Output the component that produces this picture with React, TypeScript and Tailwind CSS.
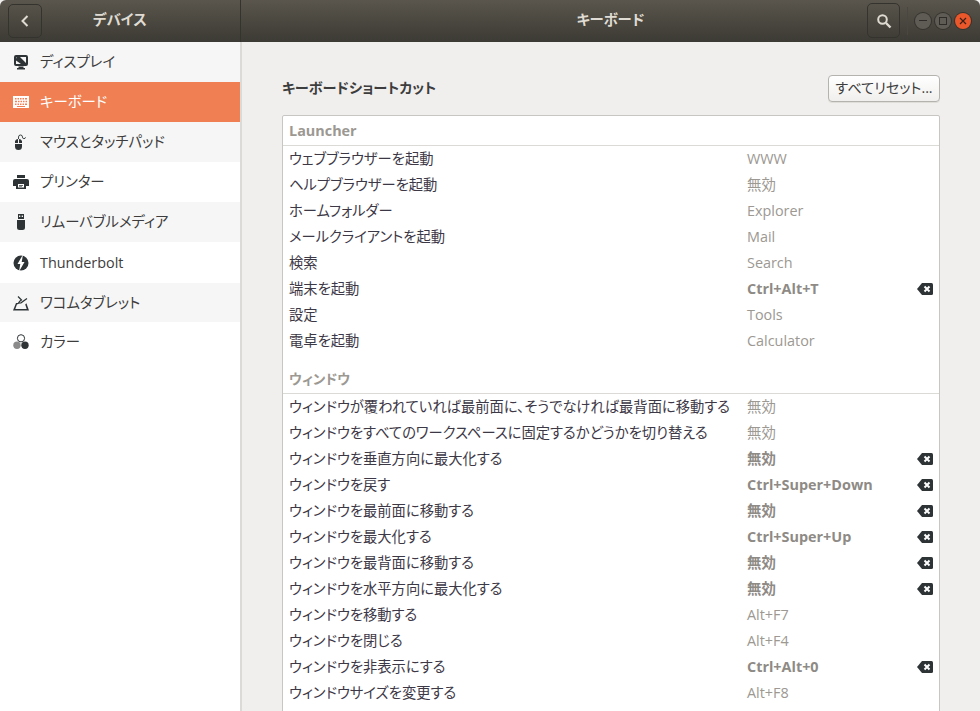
import * as React from "react";

const FONT = "font-['Open_Sans','Noto_Sans_CJK_JP',sans-serif]";

function DisplayIcon() {
  return (
    <svg width="16" height="16" viewBox="0 0 16 16" fill="#2e3436">
      <path d="M3 1h10a2 2 0 0 1 2 2v7a2 2 0 0 1-2 2H3a2 2 0 0 1-2-2V3a2 2 0 0 1 2-2zm.5 2H3v2zM7 3l6 6V3zM3 6.500V10h5z" fillRule="evenodd" />
      <path d="M5.500 12.500h5V14H12v1.500H4V14h1.500z" />
    </svg>
  );
}
function KeyboardIcon() {
  return (
    <svg width="16" height="12" viewBox="0 0 16 12" fill="#fff">
      <path
        fillRule="evenodd"
        d="M0 0h16v12H0zM2 2v1.500h1.500V2zm2.500 0v1.500H6V2zM7 2v1.500h1.500V2zm2.500 0v1.500H11V2zM12 2v1.500h2V2zM2 4.800v1.500h2V4.800zm3 0v1.500h1.500V4.800zm2.500 0v1.500H9V4.800zm2.500 0v1.500h1.500V4.800zm2.500 0v1.500H14V4.800zM2 7.600v1.500h1.500V7.600zm2.500 0v1.500H6V7.600zM7 7.600v1.500h1.500V7.600zm2.500 0v1.500H11V7.600zM12 7.600v1.500h2V7.600zM4 10v1h8v-1z"
      />
    </svg>
  );
}
function MouseIcon() {
  return (
    <svg width="14" height="16" viewBox="0 0 14 16" fill="#2e3436">
      <path d="M1 7a4 4 0 0 1 3-2v4H1zM5 5a4 4 0 0 1 3 2v2H5zM1 10h7v2.500a3.500 3.500 0 0 1-7 0z" />
      <path d="M4.500 5V3a2 2 0 0 1 4 0 1.500 1.500 0 0 0 3 .3" fill="none" stroke="#2e3436" strokeWidth="0.9" />
    </svg>
  );
}
function PrinterIcon() {
  return (
    <svg width="16" height="16" viewBox="0 0 16 16" fill="#2e3436">
      <path d="M4 1h8v3H4z" />
      <path
        fillRule="evenodd"
        d="M2 5h12a2 2 0 0 1 2 2v5h-3v3H3v-3H0V7a2 2 0 0 1 2-2zm3 5v3.500h6V10zm1 1h4v.8H6zm0 1.400h3v.6H6z"
      />
    </svg>
  );
}
function UsbIcon() {
  return (
    <svg width="10" height="16" viewBox="0 0 10 16" fill="#2e3436">
      <path fillRule="evenodd" d="M2 0h6v5H2zM3 1.500V3h1.300V1.500zm2.700 0V3H7V1.500z" />
      <path d="M1 6h8v7.500a2.500 2.500 0 0 1-2.500 2.500h-3A2.500 2.500 0 0 1 1 13.500z" />
    </svg>
  );
}
function BoltIcon() {
  return (
    <svg width="16" height="16" viewBox="0 0 16 16">
      <circle cx="8" cy="8" r="7.500" fill="#2e3436" />
      <path d="M10-.5 4.500 9H7.300L6 16.500 11.500 7H8.700z" fill="#fff" />
    </svg>
  );
}
function TabletIcon() {
  return (
    <svg width="16" height="16" viewBox="0 0 16 16" fill="#2e3436">
      <path d="M3 8h3L5 9.300H4L2.300 14h11.400l-1.500-4.500 1.200-1.200L16 15.500H0z" />
      <path d="M5 1.500 8.500 5 6.800 6.200 5.500 8 8 7.800l6-4.300" fill="none" stroke="#2e3436" strokeWidth="1.200" />
    </svg>
  );
}
function ColorIcon() {
  return (
    <svg width="16" height="16" viewBox="0 0 16 16">
      <circle cx="8" cy="4.300" r="3.600" fill="#fff" stroke="#2e3436" strokeWidth="1" />
      <circle cx="4" cy="11.300" r="3.700" fill="#8b8b8b" />
      <circle cx="12" cy="11.300" r="3.700" fill="#2e3436" />
    </svg>
  );
}
function ClearIcon() {
  return (
    <svg width="16" height="12" viewBox="0 0 16 12">
      <path d="M5 0h9.500A1.500 1.500 0 0 1 16 1.500v9a1.500 1.500 0 0 1-1.500 1.500H5L0 6z" fill="#2e3436" />
      <path d="m7.500 3.500 5 5m0-5-5 5" stroke="#fff" strokeWidth="2" />
    </svg>
  );
}

const sidebar: { label: string; icon: React.ReactNode; h: string; bg: string }[] = [
  { label: "ディスプレイ", icon: <DisplayIcon />, h: "h-10", bg: "bg-[#f6f6f6]" },
  { label: "キーボード", icon: <KeyboardIcon />, h: "h-10", bg: "bg-[#f08054] text-white" },
  { label: "マウスとタッチパッド", icon: <MouseIcon />, h: "h-10", bg: "bg-[#f6f6f6]" },
  { label: "プリンター", icon: <PrinterIcon />, h: "h-10", bg: "bg-white" },
  { label: "リムーバブルメディア", icon: <UsbIcon />, h: "h-10", bg: "bg-[#f6f6f6]" },
  { label: "Thunderbolt", icon: <BoltIcon />, h: "h-[41px]", bg: "bg-white" },
  { label: "ワコムタブレット", icon: <TabletIcon />, h: "h-[39px]", bg: "bg-[#f6f6f6]" },
  { label: "カラー", icon: <ColorIcon />, h: "h-10", bg: "bg-white" },
];

type Shortcut = { name: string; key: string; custom?: boolean };

const launcher: Shortcut[] = [
  { name: "ウェブブラウザーを起動", key: "WWW" },
  { name: "ヘルプブラウザーを起動", key: "無効" },
  { name: "ホームフォルダー", key: "Explorer" },
  { name: "メールクライアントを起動", key: "Mail" },
  { name: "検索", key: "Search" },
  { name: "端末を起動", key: "Ctrl+Alt+T", custom: true },
  { name: "設定", key: "Tools" },
  { name: "電卓を起動", key: "Calculator" },
];

const windows: Shortcut[] = [
  { name: "ウィンドウが覆われていれば最前面に、そうでなければ最背面に移動する", key: "無効" },
  { name: "ウィンドウをすべてのワークスペースに固定するかどうかを切り替える", key: "無効" },
  { name: "ウィンドウを垂直方向に最大化する", key: "無効", custom: true },
  { name: "ウィンドウを戻す", key: "Ctrl+Super+Down", custom: true },
  { name: "ウィンドウを最前面に移動する", key: "無効", custom: true },
  { name: "ウィンドウを最大化する", key: "Ctrl+Super+Up", custom: true },
  { name: "ウィンドウを最背面に移動する", key: "無効", custom: true },
  { name: "ウィンドウを水平方向に最大化する", key: "無効", custom: true },
  { name: "ウィンドウを移動する", key: "Alt+F7" },
  { name: "ウィンドウを閉じる", key: "Alt+F4" },
  { name: "ウィンドウを非表示にする", key: "Ctrl+Alt+0", custom: true },
  { name: "ウィンドウサイズを変更する", key: "Alt+F8" },
];

function Row({ item }: { item: Shortcut }) {
  return (
    <div className="flex h-[26px] items-center pl-[6px] pr-[6px]">
      <span className="w-[458px] shrink-0 whitespace-nowrap text-[14.3px] text-[#3d3846]">{item.name}</span>
      <span className={item.custom ? "font-bold text-[#8e8a85]" : "text-[#9c9892]"}>{item.key}</span>
      {item.custom && (
        <span className="ml-auto flex">
          <ClearIcon />
        </span>
      )}
    </div>
  );
}

export default function App() {
  return (
    <div className={`${FONT} flex h-[711px] w-[980px] flex-col overflow-hidden bg-[#f0efed] text-[14.4px] text-[#3d3d3d] [font-feature-settings:'palt']`}>
      {/* Title bar */}
      <div className="flex h-[42px] shrink-0 rounded-t-[6px] bg-gradient-to-b from-[#5a564d] to-[#3c3a34] text-[#dfdbd2]">
        <div className="flex w-[241px] shrink-0 items-center border-r border-[#35332e] pl-[8px]">
          <button className="flex h-[34px] w-[34px] items-center justify-center rounded-[5px] border border-[#35332e]">
            <svg width="12" height="14" viewBox="0 0 12 14">
              <path d="M8.500 2 3.500 7l5 5" fill="none" stroke="#dfdbd2" strokeWidth="2" />
            </svg>
          </button>
          <span className="mb-[3px] ml-[51px] font-semibold">デバイス</span>
        </div>
        <div className="relative flex flex-1 items-center justify-center">
          <span className="mb-[3px] font-semibold">キーボード</span>
          <div className="absolute right-[9px] top-[3px] flex items-center">
            <button className="flex h-[35px] w-[33px] items-center justify-center rounded-[5px] border border-[#35332e]">
              <svg width="16" height="16" viewBox="0 0 16 16">
                <circle cx="6.500" cy="6.500" r="4.300" fill="none" stroke="#dfdbd2" strokeWidth="2" />
                <path d="m10 10 4.500 4.500" stroke="#dfdbd2" strokeWidth="2.400" />
              </svg>
            </button>
            <div className="mx-[7px] h-[28px] w-px bg-[#4a4740]" />
            <div className="flex gap-[4px]">
              <span className="flex h-[16px] w-[16px] items-center justify-center rounded-full bg-[#5f5c55] shadow-[0_0_0_1px_#35332e]">
                <span className="h-px w-[8px] bg-[#2e2c28]" />
              </span>
              <span className="flex h-[16px] w-[16px] items-center justify-center rounded-full bg-[#5f5c55] shadow-[0_0_0_1px_#35332e]">
                <span className="h-[8px] w-[8px] border border-[#2e2c28]" />
              </span>
              <span className="flex h-[16px] w-[16px] items-center justify-center rounded-full bg-[#e9572b] shadow-[0_0_0_1px_#35332e]">
                <svg width="8" height="8" viewBox="0 0 8 8">
                  <path d="m1 1 6 6m0-6-6 6" stroke="#3a2018" strokeWidth="1.200" />
                </svg>
              </span>
            </div>
          </div>
        </div>
      </div>

      <div className="flex min-h-0 flex-1">
        {/* Sidebar */}
        <div className="w-[242px] shrink-0 border-r-2 border-[#dcdad6] bg-white">
          {sidebar.map((s) => (
            <div key={s.label} className={`flex items-center ${s.h} ${s.bg}`}>
              <span className="flex w-[40px] shrink-0 justify-center pl-[1px]">{s.icon}</span>
              <span className="whitespace-nowrap">{s.label}</span>
            </div>
          ))}
        </div>

        {/* Shortcut list */}
        <div className="min-w-0 flex-1 pl-[40px] pr-[40px] pt-[32px]">
          <div className="flex h-[28px] items-center justify-between">
            <span className="text-[14.2px] font-bold">キーボードショートカット</span>
            <button className="h-[27px] w-[112px] rounded-[4px] border border-[#b5b3ae] bg-gradient-to-b from-white to-[#f0efed] text-center text-[14.2px] text-[#3d3d3d] shadow-[0_1px_0_#e0ded9]">
              すべてリセット...
            </button>
          </div>
          <div className="mt-[13px] rounded-t-[2px] border border-[#c8c6c2] bg-white">
            <div className="flex h-[30px] items-center border-b border-[#dcdad6] px-[6px] font-bold text-[#9c9892]">
              Launcher
            </div>
            {launcher.map((item) => (
              <Row key={item.name} item={item} />
            ))}
            <div className="flex h-[40px] items-end border-b border-[#dcdad6] px-[6px] pb-[4px] text-[13.6px] font-bold text-[#9c9892]">
              ウィンドウ
            </div>
            {windows.map((item) => (
              <Row key={item.name} item={item} />
            ))}
            <div className="h-[26px]" />
          </div>
        </div>
      </div>
    </div>
  );
}
